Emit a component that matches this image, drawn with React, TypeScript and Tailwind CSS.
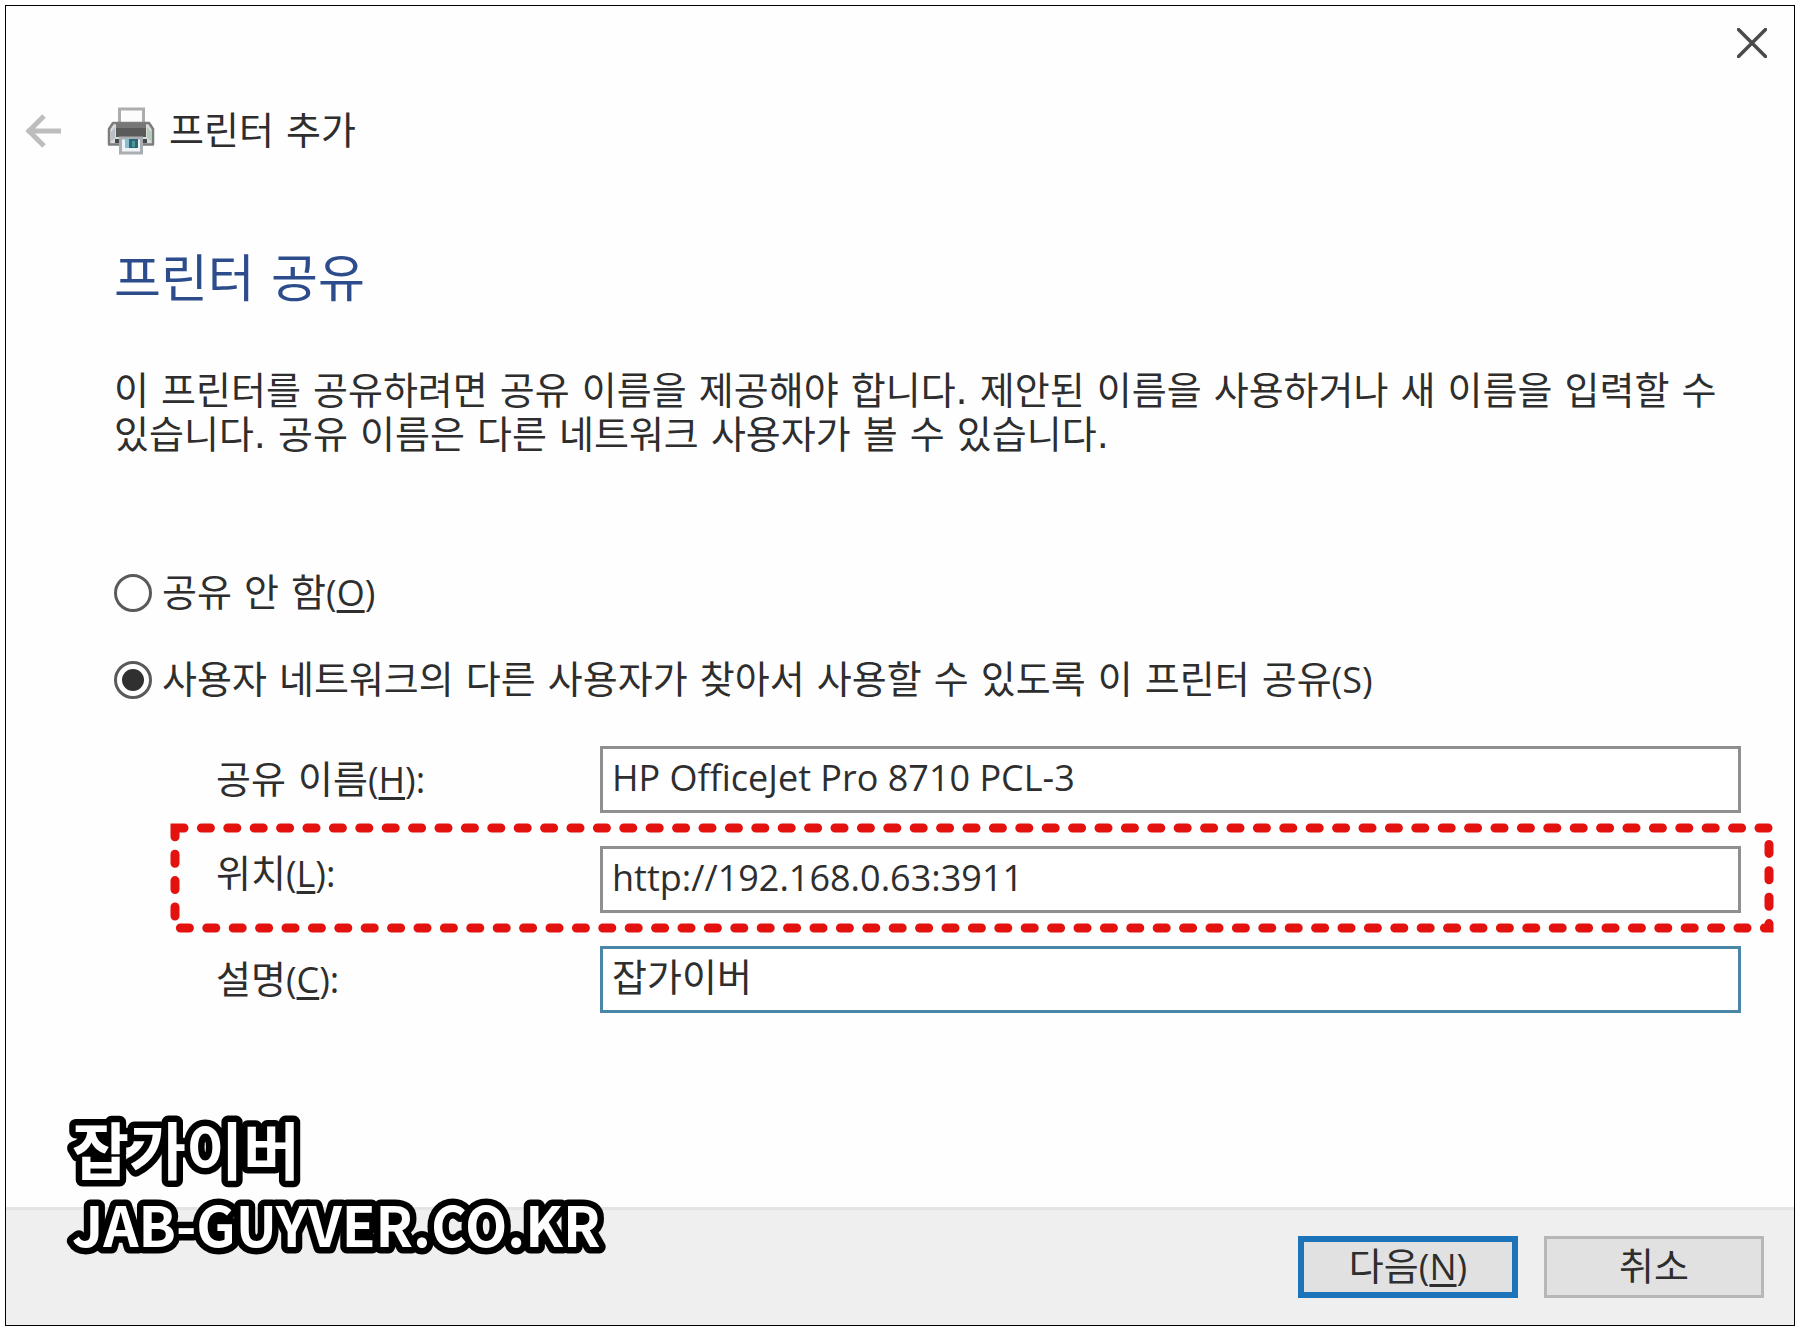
import { FC, ReactNode, useState } from "react";

interface MnemonicProps {
  letter: string;
  suffix?: string;
}

const Mnemonic: FC<MnemonicProps> = ({ letter, suffix = "" }) => (
  <span className="font-['Open_Sans','Noto_Sans_CJK_KR',sans-serif] text-[36px]">
    (<span className="underline decoration-[3px] underline-offset-4">{letter}</span>
    ){suffix}
  </span>
);

const PrinterIcon = () => (
  <svg viewBox="0 0 48 48" className="size-12" aria-hidden="true">
    <rect x="12.500" y="2" width="24" height="20" fill="#fcfcfc" stroke="#adadad" strokeWidth="3" />
    <path
      d="M6 16h36l4 6v15.500H2V22z"
      fill="#d9dbdb"
      stroke="#7b7e80"
      strokeWidth="2.500"
      strokeLinejoin="round"
    />
    <path d="M4 25l4-5v11l-4 3z" fill="#b9bfc4" />
    <path d="M44 25l-4-5v11l4 3z" fill="#b7cdb9" />
    <rect x="9" y="16" width="30" height="14" fill="#5a5a5a" />
    <rect x="9" y="16" width="30" height="5" fill="#777777" />
    <rect x="8" y="32" width="4" height="4" fill="#44484c" />
    <rect x="36" y="32" width="4" height="4" fill="#44484c" />
    <path d="M13.500 31h21v15h-21z" fill="#eef4f6" stroke="#a9aeb2" strokeWidth="3" />
    <rect x="18" y="32" width="4" height="9" fill="#86bfd0" />
    <rect x="22" y="32" width="9" height="9" fill="#2f6679" />
    <rect x="25" y="34" width="3" height="6" fill="#4c9b94" />
  </svg>
);

interface ShareOptionProps {
  value: string;
  selected: string;
  onSelect: (value: string) => void;
  children: ReactNode;
}

const ShareOption: FC<ShareOptionProps> = ({ value, selected, onSelect, children }) => (
  <label className="flex h-10 w-max items-center gap-[10px]">
    <input
      type="radio"
      name="share"
      value={value}
      checked={selected === value}
      onChange={() => onSelect(value)}
      className="grid size-[38px] appearance-none place-content-center rounded-full border-[3px] border-[#5a5a5a] bg-white checked:before:size-[22px] checked:before:rounded-full checked:before:bg-[#303030] checked:before:content-['']"
    />
    <span className="whitespace-nowrap leading-10">{children}</span>
  </label>
);

const fieldClass =
  "h-[67px] w-full border-[3px] bg-white px-[9px] font-['Open_Sans','Noto_Sans_CJK_KR',sans-serif] outline-none";

const App = () => {
  const [share, setShare] = useState("on");
  const [name, setName] = useState("HP OfficeJet Pro 8710 PCL-3");
  const [location, setLocation] = useState("http://192.168.0.63:3911");
  const [comment, setComment] = useState("잡가이버");

  return (
    <div className="flex min-h-screen bg-white p-[5px] font-['DejaVu_Sans','Noto_Sans_CJK_KR',sans-serif] text-[38px] text-[#2e2e2e]">
      <main className="relative flex flex-1 flex-col border border-black bg-[#fefefe]">
        <div className="flex h-[74px] justify-end px-[27px] pt-[22px]">
          <button type="button" aria-label="닫기" className="size-[30px]">
            <svg viewBox="0 0 30 30" className="size-full">
              <path d="M1.500 1.500l27 27M28.500 1.500l-27 27" stroke="#4a4a4a" strokeWidth="3.500" strokeLinecap="round" />
            </svg>
          </button>
        </div>

        <header className="flex h-[102px] items-center pl-[19px]">
          <button type="button" aria-label="뒤로" className="h-9 w-9">
            <svg viewBox="0 0 36 36" className="size-full" fill="none">
              <path d="M2 18h34M19 3L4 18l15 15" stroke="#bdbdbd" strokeWidth="5" />
            </svg>
          </button>
          <div className="ml-[46px] flex items-center gap-[14px]">
            <PrinterIcon />
            <span className="leading-10">프린터 추가</span>
          </div>
        </header>

        <section className="pl-[108px] pr-[53px]">
          <h1 className="mt-[68px] text-[51px] leading-[60px] text-[#2d4c8c]">프린터 공유</h1>
          <p className="mt-[59px] break-keep leading-[44px]">
            이 프린터를 공유하려면 공유 이름을 제공해야 합니다. 제안된 이름을 사용하거나 새 이름을
            입력할 수 있습니다. 공유 이름은 다른 네트워크 사용자가 볼 수 있습니다.
          </p>

          <div className="mt-[116px] flex flex-col gap-[47px]">
            <ShareOption value="off" selected={share} onSelect={setShare}>
              공유 안 함<Mnemonic letter="O" />
            </ShareOption>
            <ShareOption value="on" selected={share} onSelect={setShare}>
              사용자 네트워크의 다른 사용자가 찾아서 사용할 수 있도록 이 프린터 공유
              <span className="font-['Open_Sans','Noto_Sans_CJK_KR',sans-serif] text-[36px]">(S)</span>
            </ShareOption>
          </div>

          <div className="mt-[46px] flex flex-col gap-[33px] pl-[102px]">
            <div className="grid grid-cols-[384px_1fr] items-center">
              <label htmlFor="share-name" className="leading-10">
                공유 이름
                <Mnemonic letter="H" suffix=":" />
              </label>
              <input
                id="share-name"
                value={name}
                onChange={(e) => setName(e.target.value)}
                className={`${fieldClass} border-[#8f8f8f] pb-1 text-[36px]`}
              />
            </div>
            <div className="relative grid grid-cols-[384px_1fr] items-center">
              <label htmlFor="share-location" className="pb-3 leading-10">
                위치
                <Mnemonic letter="L" suffix=":" />
              </label>
              <input
                id="share-location"
                value={location}
                onChange={(e) => setLocation(e.target.value)}
                className={`${fieldClass} border-[#8f8f8f] pb-1 text-[36px]`}
              />
              {/* highlight around the location row */}
              <div className="pointer-events-none absolute -bottom-[15px] -left-[41px] -right-7 -top-[18px]">
                <svg width="100%" height="100%" className="overflow-visible">
                  <rect
                    width="100%"
                    height="100%"
                    fill="none"
                    stroke="#e3120f"
                    strokeWidth="9"
                    strokeLinecap="round"
                    strokeDasharray="9 17.400"
                  />
                </svg>
              </div>
            </div>
            <div className="grid grid-cols-[384px_1fr] items-center">
              <label htmlFor="share-comment" className="leading-10">
                설명
                <Mnemonic letter="C" suffix=":" />
              </label>
              <input
                id="share-comment"
                value={comment}
                onChange={(e) => setComment(e.target.value)}
                className={`${fieldClass} border-[#4a86a8] pb-2.5 text-[38px]`}
              />
            </div>
          </div>
        </section>

        <footer className="mt-auto flex justify-end gap-[26px] border-t-[3px] border-[#e4e4e4] bg-[#efefef] pb-[27px] pl-6 pr-[30px] pt-[26px]">
          <button
            type="button"
            className="h-[62px] w-[220px] border-[6px] border-[#1b73b9] bg-[#e1e1e1] leading-10"
          >
            다음
            <Mnemonic letter="N" />
          </button>
          <button
            type="button"
            className="h-[62px] w-[220px] border-[3px] border-[#b7b7b7] bg-[#e1e1e1] leading-10"
          >
            취소
          </button>
        </footer>

        {/* watermark, svg text for the round outline */}
        <svg
          className="pointer-events-none absolute bottom-0 left-[58px] h-[220px] w-[600px] overflow-visible fill-white stroke-black font-['Noto_Sans_CJK_KR',sans-serif] font-bold [paint-order:stroke]"
          strokeWidth="13"
          strokeLinejoin="round"
        >
          <text x="8" y="70" className="text-[62px]">
            잡가이버
          </text>
          <text x="8" y="142" className="text-[55px]">
            JAB-GUYVER.CO.KR
          </text>
        </svg>
      </main>
    </div>
  );
};

export default App;
